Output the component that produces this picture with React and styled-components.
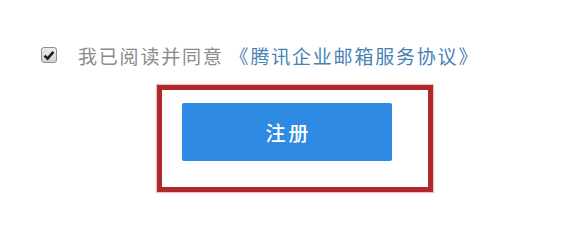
import React from "react";
import styled, { createGlobalStyle } from "styled-components";

const Global = createGlobalStyle`
  html, body { margin: 0; padding: 0; background: #fff; }
  body { font-family: "Noto Sans CJK SC", "Noto Sans", sans-serif; }
`;

const Page = styled.div`
  width: 578px;
  height: 231px;
  box-sizing: border-box;
  padding-top: 44px;
  background: #fff;
  display: flex;
  flex-direction: column;
`;

const AgreeRow = styled.label`
  display: flex;
  align-items: center;
  padding-left: 41px;
  height: 22px;
  font-size: 19px;
  letter-spacing: 1.8px;
  color: #8c8c8c;
`;

const Check = styled.span`
  width: 16px;
  height: 16px;
  box-sizing: border-box;
  border: 1px solid #8e8e8e;
  border-radius: 3px;
  background: linear-gradient(#ececec, #d2d2d2);
  display: flex;
  align-items: center;
  justify-content: center;
  margin-right: 21px;
`;

const Link = styled.a`
  color: #4a7fb6;
  text-decoration: none;
  margin-left: 6px;
`;

const Mark = styled.div`
  margin-top: 19px;
  margin-left: 157px;
  width: 276px;
  height: 107px;
  box-sizing: border-box;
  border: 5px solid #b0282a;
  box-shadow: 0 0 1px 1px rgba(200, 80, 80, 0.35);
  padding: 13px 0 0 20px;
`;

const Button = styled.button`
  width: 210px;
  height: 58px;
  border: none;
  border-radius: 2px;
  background: #2e8ae2;
  color: #fff;
  font-family: "Noto Sans CJK SC", "Noto Sans", sans-serif;
  font-size: 20px;
  font-weight: 500;
  letter-spacing: 3px;
  padding: 0 0 0 3px;
  display: flex;
  align-items: center;
  justify-content: center;
`;

export default function App() {
  return (
    <>
      <Global />
      <Page>
        <AgreeRow>
          <Check>
            <svg width="12" height="11" viewBox="0 0 12 11">
              <path d="M1.6 5.6 L4.6 8.6 L10.4 1.8" fill="none" stroke="#1e1e1e" strokeWidth="2.6" />
            </svg>
          </Check>
          我已阅读并同意
          <Link href="#">《腾讯企业邮箱服务协议》</Link>
        </AgreeRow>
        <Mark>
          <Button>注册</Button>
        </Mark>
      </Page>
    </>
  );
}
